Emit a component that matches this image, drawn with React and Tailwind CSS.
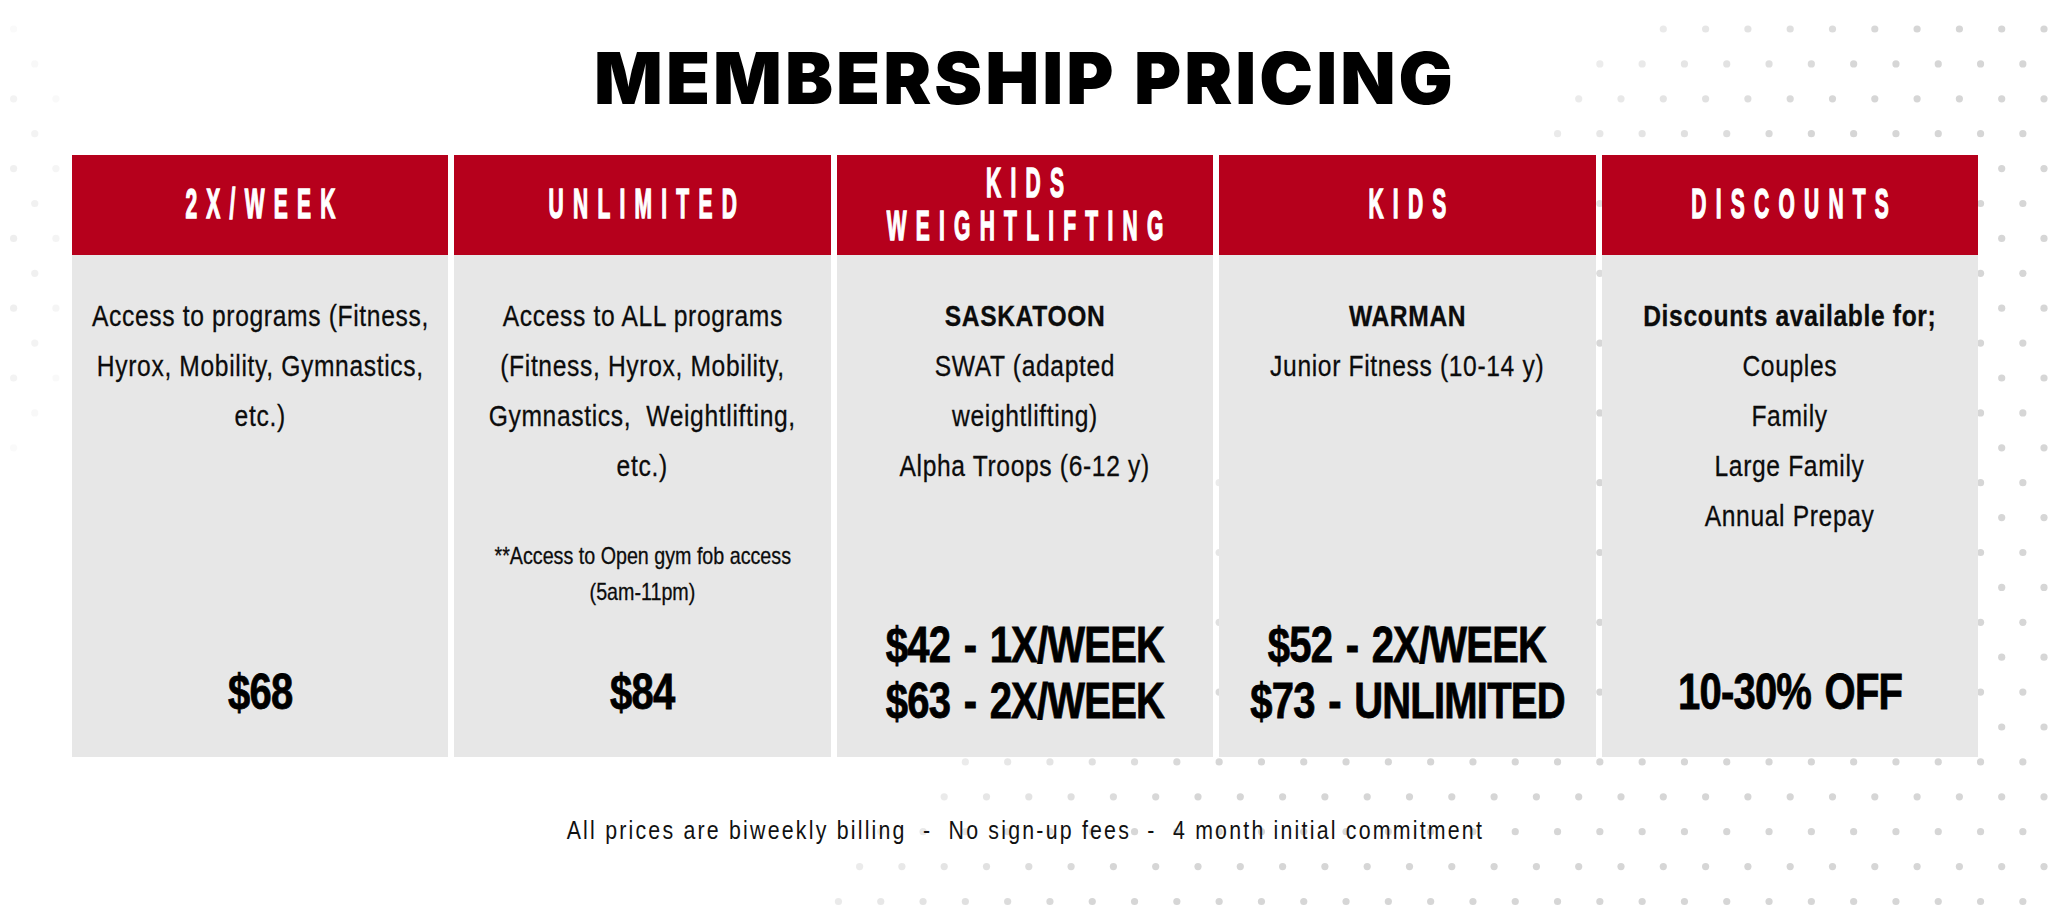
import React from 'react'

const plans = [
  {
    title: ['2X/WEEK'],
    head: null,
    lines: ['Access to programs (Fitness,', 'Hyrox, Mobility, Gymnastics,', 'etc.)'],
    note: null,
    prices: ['$68'],
    pad: 'pb-[37px]',
  },
  {
    title: ['UNLIMITED'],
    head: null,
    lines: ['Access to ALL programs', '(Fitness, Hyrox, Mobility,', 'Gymnastics,\u00a0 Weightlifting,', 'etc.)'],
    note: ['**Access to Open gym fob access', '(5am-11pm)'],
    prices: ['$84'],
    pad: 'pb-[37px]',
  },
  {
    title: ['KIDS', 'WEIGHTLIFTING'],
    head: 'SASKATOON',
    lines: ['SWAT (adapted', 'weightlifting)', 'Alpha Troops (6-12 y)'],
    note: null,
    prices: ['$42 - 1X/WEEK', '$63 - 2X/WEEK'],
    pad: 'pb-[28px]',
  },
  {
    title: ['KIDS'],
    head: 'WARMAN',
    lines: ['Junior Fitness (10-14 y)'],
    note: null,
    prices: ['$52 - 2X/WEEK', '$73 - UNLIMITED'],
    pad: 'pb-[28px]',
  },
  {
    title: ['DISCOUNTS'],
    head: 'Discounts available for;',
    lines: ['Couples', 'Family', 'Large Family', 'Annual Prepay'],
    note: null,
    prices: ['10-30% OFF'],
    pad: 'pb-[37px]',
  },
]

function Dots() {
  const dots = []
  for (let r = 0; r < 26; r++) {
    const y = 29 + r * 34.9
    const off = r % 2 ? 21.15 : 0
    for (let c = -1; c < 50; c++) {
      const x = 13.6 + off + c * 42.3
      // right band, diagonal edge
      const edge = 1630 - 0.94 * (y - 29)
      if (x >= edge - 4) {
        const o = Math.min(1, 0.45 + (x - edge) / 500)
        dots.push({ x, y, o })
        continue
      }
      // left fade
      const d = Math.pow(x / 80, 2) + Math.pow((y - 240) / 215, 2)
      if (d < 1) dots.push({ x, y, o: 0.12 + 0.3 * (1 - d) })
    }
  }
  return (
    <svg className="absolute inset-0 pointer-events-none" width="2050" height="915">
      {dots.map((p, i) => (
        <circle key={i} cx={p.x} cy={p.y} r="3.6" fill="#d6d6d6" opacity={p.o} />
      ))}
    </svg>
  )
}

// condensed look: Liberation Sans squeezed horizontally
const narrow = "font-['Liberation_Sans',sans-serif]"

function Column({ plan }) {
  return (
    <div className="flex flex-col">
      {/* header */}
      <div className="h-[100px] bg-[#b6001c] flex items-center justify-center pb-[3px]">
        <span className={`inline-block scale-x-50 whitespace-nowrap text-center ${narrow} font-bold text-[42px] leading-[43px] tracking-[0.44em] pl-[0.44em] text-white [-webkit-text-stroke:1.5px_white]`}>
          {plan.title.map((t, i) => (
            <div key={i}>{t}</div>
          ))}
        </span>
      </div>

      {/* body */}
      <div className={`h-[502px] bg-[#e7e7e7] flex flex-col items-center pt-[36px] text-[#0c0c0c] ${narrow} [-webkit-text-stroke:0.3px_#0c0c0c]`}>
        <div className="flex flex-col items-center text-[30px] leading-[50px] tracking-[0.8px]">
          {plan.head && <div className="whitespace-nowrap font-bold scale-x-[0.82]">{plan.head}</div>}
          {plan.lines.map((l, i) => (
            <div key={i} className="whitespace-nowrap scale-x-[0.82]">{l}</div>
          ))}
        </div>
        {plan.note && (
          <div className="mt-[47px] flex flex-col items-center text-[24px] leading-[36px]">
            {plan.note.map((l, i) => (
              <div key={i} className="whitespace-nowrap scale-x-[0.82]">{l}</div>
            ))}
          </div>
        )}
        <div className={`mt-auto flex flex-col items-center font-bold text-[50px] leading-[56px] tracking-[-1px] [word-spacing:4px] text-black [-webkit-text-stroke:0.8px_black] ${plan.pad}`}>
          {plan.prices.map((p, i) => (
            <div key={i} className="whitespace-nowrap scale-x-[0.8]">{p}</div>
          ))}
        </div>
      </div>
    </div>
  )
}

export default function App() {
  return (
    <div className="relative w-[2050px] h-[915px] overflow-hidden bg-white">
      <Dots />

      <div className="relative flex flex-col items-center">
        {/* Title */}
        <h1 className="mt-[42px] font-['Inter',sans-serif] font-black text-[72px] leading-[72px] tracking-[0.042em] text-black">
          MEMBERSHIP PRICING
        </h1>

        {/* Table */}
        <div className="mt-[41px] w-full px-[72px] grid grid-cols-5 gap-[6px]">
          {plans.map((p, i) => (
            <Column key={i} plan={p} />
          ))}
        </div>

        {/* Footer */}
        <p className={`mt-[58px] whitespace-pre scale-x-[0.82] ${narrow} text-[26px] leading-[30px] tracking-[2.7px] text-[#111]`}>
          {'All prices are biweekly billing  -  No sign-up fees  -  4 month initial commitment'}
        </p>
      </div>
    </div>
  )
}
